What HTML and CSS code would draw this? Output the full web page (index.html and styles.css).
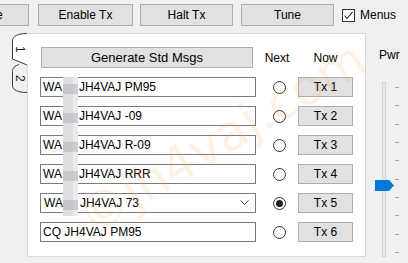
FILE: index.html
```html
<!DOCTYPE html>
<html lang="en">

<head>
    <meta charset="UTF-8">
    <title>Tx Messages</title>
    <link rel="stylesheet" href="styles.css">
</head>

<body>
    <div class="toolbar">
        <button class="btn btn-decode">Decode</button>
        <button class="btn btn-enable">Enable Tx</button>
        <button class="btn btn-halt">Halt Tx</button>
        <button class="btn btn-tune">Tune</button>
        <label class="check">
            <span class="check-box">
                <svg width="11" height="11" viewBox="0 0 11 11">
                    <polyline points="1.5,5.5 4,8.5 9.5,2" fill="none" stroke="#222" stroke-width="1.1" />
                </svg>
            </span>
            Menus
        </label>
    </div>

    <div class="main">
        <svg class="tabs" width="28" height="70" viewBox="0 0 28 70">
            <!-- tab 2 sits behind tab 1 -->
            <path d="M19,31.5 C14.5,33 12.5,35 12.5,38.5 L12.5,53 C13,57 18,59.5 27,59.5" fill="#f0f0f0" stroke="#3a3a3a" />
            <path d="M28,0.5 C18,0.5 12.5,3 12.5,8 L12.5,26 L27,32 L28,32 Z" fill="#fff" />
            <path d="M27,0.5 C18,0.5 12.5,3 12.5,8 L12.5,26 L27,32" fill="none" stroke="#3a3a3a" />
            <text x="16" y="13" transform="rotate(90 16 13)" class="tab-label">1</text>
            <text x="16" y="42" transform="rotate(90 16 42)" class="tab-label">2</text>
        </svg>

        <div class="panel">
            <div class="msg-grid">
                <button class="btn btn-gen">Generate Std Msgs</button>
                <div class="head">Next</div>
                <div class="head">Now</div>

                <div class="field">WA<span class="gap"></span>JH4VAJ PM95</div>
                <div class="radio-cell"><span class="radio"></span></div>
                <button class="btn btn-tx">Tx 1</button>

                <div class="field">WA<span class="gap"></span>JH4VAJ -09</div>
                <div class="radio-cell"><span class="radio"></span></div>
                <button class="btn btn-tx">Tx 2</button>

                <div class="field">WA<span class="gap"></span>JH4VAJ R-09</div>
                <div class="radio-cell"><span class="radio"></span></div>
                <button class="btn btn-tx">Tx 3</button>

                <div class="field">WA<span class="gap"></span>JH4VAJ RRR</div>
                <div class="radio-cell"><span class="radio"></span></div>
                <button class="btn btn-tx">Tx 4</button>

                <div class="field combo">
                    <span class="combo-text">WA<span class="gap"></span>JH4VAJ 73</span>
                    <svg class="chevron" width="9" height="6" viewBox="0 0 9 6">
                        <polyline points="0.5,0.5 4.5,4.5 8.5,0.5" fill="none" stroke="#444" />
                    </svg>
                </div>
                <div class="radio-cell"><span class="radio checked"></span></div>
                <button class="btn btn-tx">Tx 5</button>

                <div class="field">CQ JH4VAJ PM95</div>
                <div class="radio-cell"><span class="radio"></span></div>
                <button class="btn btn-tx">Tx 6</button>
            </div>
            <!-- pixelated cover over the other callsign -->
            <div class="mask"></div>
        </div>

        <div class="power">
            <div class="power-label">Pwr</div>
            <div class="slider">
                <div class="track"></div>
                <div class="ticks">
                    <span></span><span></span><span></span><span></span><span></span>
                    <span></span><span></span><span></span><span></span><span></span>
                </div>
                <div class="thumb"></div>
            </div>
        </div>
    </div>

    <div class="watermark">©jh4vaj.com</div>
</body>

</html>
```

FILE: styles.css
```css
body {
    margin: 0;
    width: 408px;
    height: 263px;
    overflow: hidden;
    position: relative;
    background-color: #f0f0f0;
    font-family: "Liberation Sans", Arial, sans-serif;
    font-size: 12px;
    color: #000;
}

.btn {
    box-sizing: border-box;
    height: 22px;
    padding: 0;
    border: 1px solid #adadad;
    background-color: #e1e1e1;
    font-family: inherit;
    font-size: 12px;
    color: #000;
}

/* top row of buttons */
.toolbar {
    display: flex;
    align-items: center;
    margin-top: 4px;
    margin-left: -65px;
    height: 22px;
}

.toolbar .btn {
    flex: none;
}

.btn-decode {
    width: 94px;
}

.btn-enable {
    width: 95px;
    margin-left: 9px;
}

.btn-halt {
    width: 93px;
    margin-left: 7px;
}

.btn-tune {
    width: 93px;
    margin-left: 8px;
}

.check {
    display: flex;
    align-items: center;
    margin-left: 8px;
    gap: 5px;
}

.check-box {
    box-sizing: border-box;
    width: 13px;
    height: 13px;
    border: 1px solid #333;
    background: #fff;
    display: flex;
}

/* tabs + panel + power slider */
.main {
    display: flex;
    align-items: flex-start;
    margin-top: 7px;
}

.tabs {
    flex: none;
    width: 28px;
    margin-right: -1px;
    position: relative;
    z-index: 1;
    overflow: visible;
}

.tab-label {
    font-family: "Liberation Sans", Arial, sans-serif;
    font-size: 12px;
    fill: #222;
}

.panel {
    position: relative;
    box-sizing: border-box;
    width: 339px;
    height: 224px;
    border: 1px solid #d9d9d9;
    background-color: #fff;
    padding: 13px 12px 14px 12px;
}

.msg-grid {
    display: grid;
    grid-template-columns: 216px 42px 55px;
    grid-template-rows: 21px repeat(6, 20px);
    row-gap: 9px;
    align-items: center;
}

.btn-gen {
    width: 212px;
    height: 21px;
    margin-left: 1px;
    font-size: 13px;
}

.head {
    text-align: center;
}

.field {
    box-sizing: border-box;
    height: 20px;
    border: 1px solid #7a7a7a;
    padding-left: 2px;
    display: flex;
    align-items: center;
    white-space: pre;
}

.gap {
    display: inline-block;
    width: 17px;
}

.combo {
    justify-content: space-between;
}

.combo-text {
    display: flex;
    align-items: center;
    padding-left: 1px;
}

.chevron {
    margin-right: 6px;
}

.radio-cell {
    display: flex;
    justify-content: center;
    padding-left: 4px;
}

.radio {
    box-sizing: border-box;
    width: 13px;
    height: 13px;
    border: 1px solid #333;
    border-radius: 50%;
    display: flex;
    align-items: center;
    justify-content: center;
}

.radio.checked::after {
    content: "";
    width: 7px;
    height: 7px;
    border-radius: 50%;
    background: #222;
}

.btn-tx {
    height: 20px;
}

.mask {
    position: absolute;
    left: 35px;
    top: 43px;
    width: 15px;
    height: 139px;
    background:
        repeating-linear-gradient(to bottom,
            transparent 0 7px,
            rgba(175, 175, 180, 0.5) 7px 17px,
            transparent 17px 29px),
        linear-gradient(to right, #dedee2 0 10px, #ebebee 10px 15px);
}

/* power slider */
.power {
    display: flex;
    flex-direction: column;
    width: 42px;
}

.power-label {
    margin-top: 15px;
    margin-left: 13px;
}

.slider {
    position: relative;
    display: flex;
    height: 175px;
    margin-top: 20px;
    margin-left: 16px;
}

.track {
    box-sizing: border-box;
    width: 4px;
    height: 100%;
    border: 1px solid #d6d6d6;
    background: #e7eaea;
}

.ticks {
    display: flex;
    flex-direction: column;
    justify-content: space-between;
    margin-left: 9px;
    padding: 5px 0 4px 0;
}

.ticks span {
    width: 4px;
    height: 1px;
    background: #a5a59a;
}

.thumb {
    position: absolute;
    left: -7px;
    top: 98px;
    width: 19px;
    height: 11px;
    background: #0078d7;
    clip-path: polygon(0 0, 14px 0, 19px 5.5px, 14px 11px, 0 11px);
}

.watermark {
    position: absolute;
    left: 222px;
    top: 138px;
    font-size: 50px;
    font-family: "DejaVu Sans", sans-serif;
    color: rgba(250, 160, 70, 0.14);
    transform: translate(-50%, -50%) rotate(-31deg);
    pointer-events: none;
    white-space: nowrap;
}
```
